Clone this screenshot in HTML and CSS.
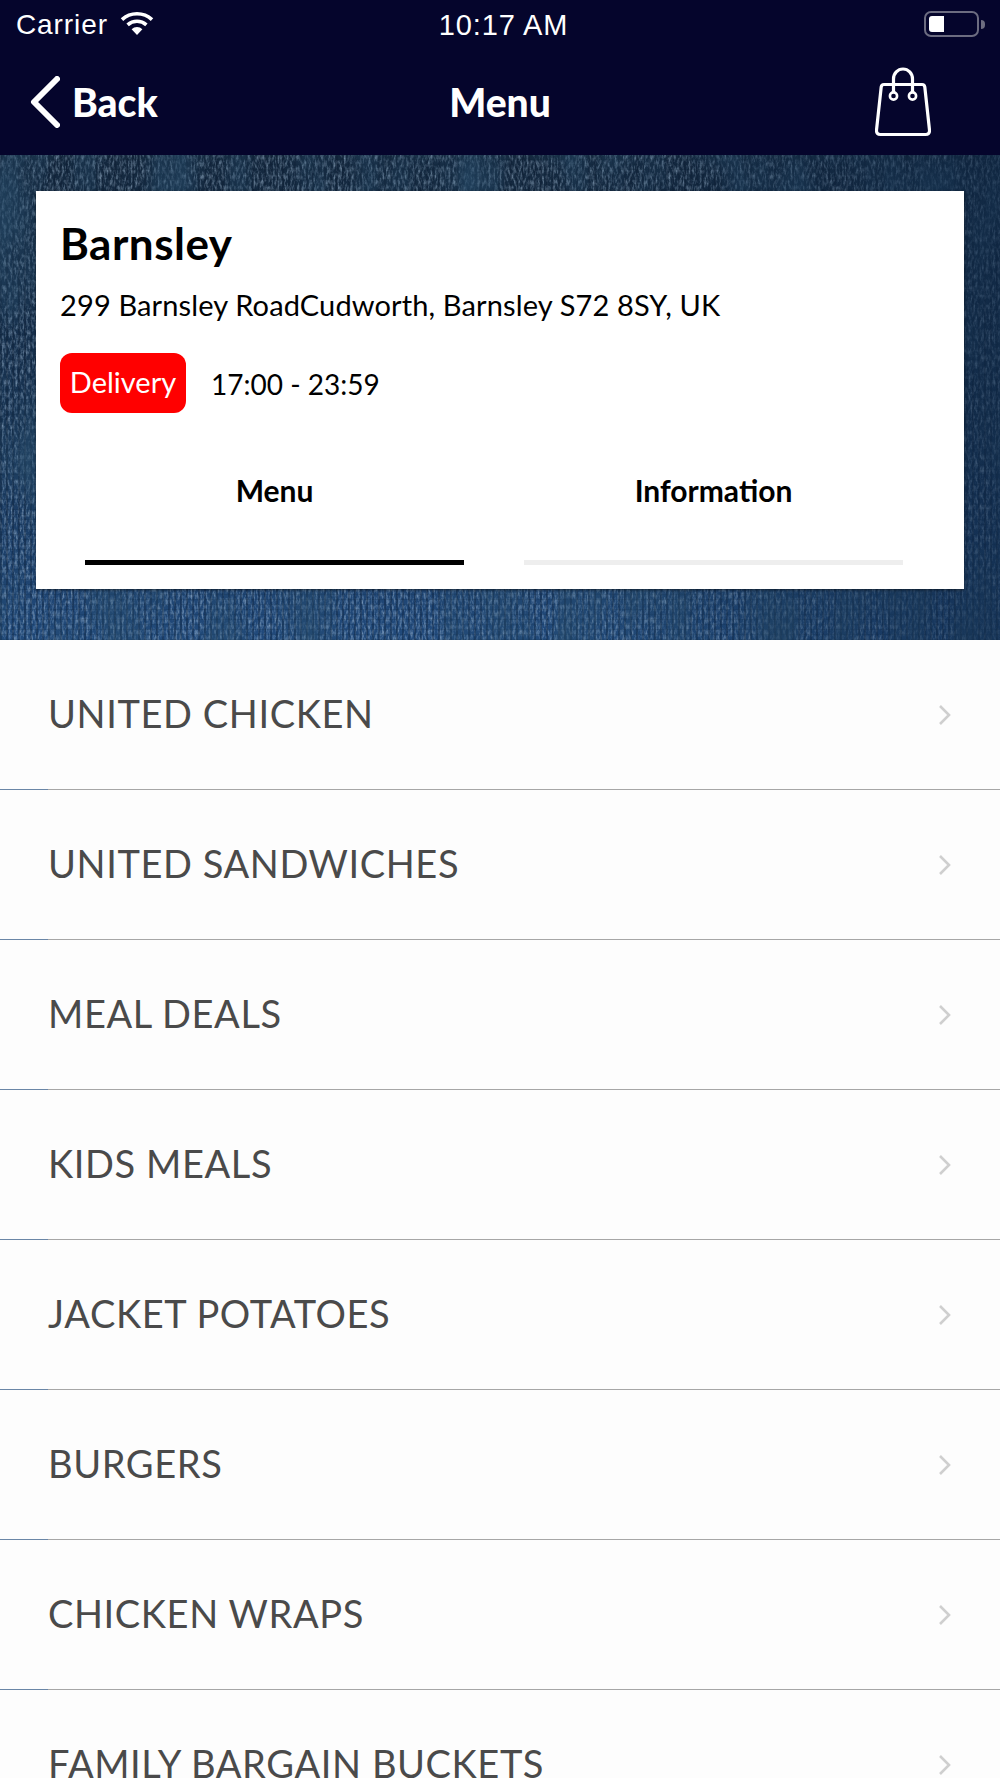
FILE: index.html
```html
<!DOCTYPE html>
<html lang="en">
<head>
  <meta charset="UTF-8" />
  <meta name="viewport" content="width=device-width, initial-scale=1.0" />
  <title>Menu - Barnsley</title>
  <link rel="stylesheet" href="styles.css">
</head>
<body>
  <header class="topbar">
    <div class="status">
      <div class="status-left">
        <span class="carrier">Carrier</span>
        <svg class="wifi" width="34" height="24" viewBox="0 0 34 24">
          <path d="M17 24 L11.6 18.2 A8 8 0 0 1 22.4 18.2 Z" fill="#fff"/>
          <path d="M2 8.6 A22 22 0 0 1 32 8.6" fill="none" stroke="#fff" stroke-width="3.6"/>
          <path d="M7.6 13.8 A14.2 14.2 0 0 1 26.4 13.8" fill="none" stroke="#fff" stroke-width="3.6"/>
        </svg>
      </div>
      <div class="status-time">10:17 AM</div>
      <div class="status-right">
        <span class="battery"><span class="battery-level"></span></span>
        <span class="battery-nub"></span>
      </div>
    </div>
    <nav class="navbar">
      <a class="back">
        <svg width="30" height="52" viewBox="0 0 30 52">
          <path d="M27 3 L4 26 L27 49" fill="none" stroke="#fff" stroke-width="6" stroke-linecap="round" stroke-linejoin="round"/>
        </svg>
        <span>Back</span>
      </a>
      <div class="nav-title">Menu</div>
      <div class="nav-right">
        <svg width="56" height="70" viewBox="0 0 56 70">
          <path d="M9 17.5 H47 Q49.5 17.5 49.8 20 L54.5 63 Q54.8 67.5 50.5 67.5 H5.5 Q1.2 67.5 1.5 63 L6.2 20 Q6.5 17.5 9 17.5 Z" fill="none" stroke="#fff" stroke-width="3.2"/>
          <path d="M18.5 25 V12 A9.5 10 0 0 1 37.5 12 V25" fill="none" stroke="#fff" stroke-width="3.2"/>
          <circle cx="18.5" cy="29" r="3.6" fill="#05052c" stroke="#fff" stroke-width="2.6"/>
          <circle cx="37.5" cy="29" r="3.6" fill="#05052c" stroke="#fff" stroke-width="2.6"/>
        </svg>
      </div>
    </nav>
  </header>

  <section class="hero">
    <svg class="denim" width="1000" height="485">
      <defs>
        <filter id="weave" x="0" y="0" width="100%" height="100%">
          <feTurbulence type="fractalNoise" baseFrequency="0.45 0.16" numOctaves="3" seed="11"/>
          <feColorMatrix type="matrix" values="0 0 0 0 0.5  0 0 0 0 0.66  0 0 0 0 0.84  1.8 0 0 0 -0.72"/>
        </filter>
        <filter id="patches" x="0" y="0" width="100%" height="100%">
          <feTurbulence type="fractalNoise" baseFrequency="0.02 0.006" numOctaves="3" seed="4"/>
          <feColorMatrix type="matrix" values="0 0 0 0 0.02  0 0 0 0 0.07  0 0 0 0 0.14  2.6 0 0 0 -1.0"/>
        </filter>
        <linearGradient id="shade" x1="0" y1="0" x2="0" y2="1">
          <stop offset="0" stop-color="#14283e"/>
          <stop offset="0.55" stop-color="#183454"/>
          <stop offset="1" stop-color="#214a7c"/>
        </linearGradient>
        <linearGradient id="fade" x1="0" y1="0" x2="1" y2="0">
          <stop offset="0.6" stop-color="#0c2340" stop-opacity="0"/>
          <stop offset="1" stop-color="#0c2340" stop-opacity="0.55"/>
        </linearGradient>
        <pattern id="ribs" width="6" height="5" patternUnits="userSpaceOnUse">
          <rect x="0" width="2" height="5" fill="#0a1a2e" opacity="0.32"/>
          <rect y="4" width="6" height="1" fill="#0a1a2e" opacity="0.14"/>
        </pattern>
      </defs>
      <rect width="1000" height="485" fill="url(#shade)"/>
      <rect width="1000" height="485" filter="url(#weave)" opacity="0.6"/>
      <rect width="1000" height="485" fill="url(#ribs)"/>
      <rect width="1000" height="485" filter="url(#patches)" opacity="0.6"/>
      <rect width="1000" height="485" fill="url(#fade)"/>
    </svg>
    <div class="card">
      <h1 class="store-name">Barnsley</h1>
      <p class="store-address">299 Barnsley RoadCudworth, Barnsley S72 8SY, UK</p>
      <div class="store-hours">
        <span class="badge">Delivery</span>
        <span class="hours">17:00 - 23:59</span>
      </div>
      <div class="tabs">
        <div class="tab tab-active">Menu</div>
        <div class="tab">Information</div>
      </div>
    </div>
  </section>

  <ul class="menu-list">
    <li class="menu-row"><span>UNITED CHICKEN</span><svg class="chev" width="13" height="22" viewBox="0 0 13 22"><path d="M2 2 L11 11 L2 20" fill="none" stroke="#cfcfcf" stroke-width="2.6"/></svg></li>
    <li class="menu-row"><span>UNITED SANDWICHES</span><svg class="chev" width="13" height="22" viewBox="0 0 13 22"><path d="M2 2 L11 11 L2 20" fill="none" stroke="#cfcfcf" stroke-width="2.6"/></svg></li>
    <li class="menu-row"><span>MEAL DEALS</span><svg class="chev" width="13" height="22" viewBox="0 0 13 22"><path d="M2 2 L11 11 L2 20" fill="none" stroke="#cfcfcf" stroke-width="2.6"/></svg></li>
    <li class="menu-row"><span>KIDS MEALS</span><svg class="chev" width="13" height="22" viewBox="0 0 13 22"><path d="M2 2 L11 11 L2 20" fill="none" stroke="#cfcfcf" stroke-width="2.6"/></svg></li>
    <li class="menu-row"><span>JACKET POTATOES</span><svg class="chev" width="13" height="22" viewBox="0 0 13 22"><path d="M2 2 L11 11 L2 20" fill="none" stroke="#cfcfcf" stroke-width="2.6"/></svg></li>
    <li class="menu-row"><span>BURGERS</span><svg class="chev" width="13" height="22" viewBox="0 0 13 22"><path d="M2 2 L11 11 L2 20" fill="none" stroke="#cfcfcf" stroke-width="2.6"/></svg></li>
    <li class="menu-row"><span>CHICKEN WRAPS</span><svg class="chev" width="13" height="22" viewBox="0 0 13 22"><path d="M2 2 L11 11 L2 20" fill="none" stroke="#cfcfcf" stroke-width="2.6"/></svg></li>
    <li class="menu-row"><span>FAMILY BARGAIN BUCKETS</span><svg class="chev" width="13" height="22" viewBox="0 0 13 22"><path d="M2 2 L11 11 L2 20" fill="none" stroke="#cfcfcf" stroke-width="2.6"/></svg></li>
  </ul>
</body>
</html>
```

FILE: styles.css
```css
html, body {
  height: 1778px;
  overflow: hidden;
}
body {
  margin: 0;
  background-color: #fdfdfd;
  font-family: "Lato", "Liberation Sans", sans-serif;
}
.topbar {
  height: 155px;
  background-color: #05052c;
  color: #fff;
}
.status {
  height: 50px;
  display: grid;
  grid-template-columns: 1fr auto 1fr;
  align-items: center;
  padding: 0 15px 0 16px;
  font-family: "Liberation Sans", Arial, sans-serif;
  font-size: 27px;
  letter-spacing: 0.9px;
}
.status-left {
  display: flex;
  align-items: center;
  gap: 12px;
}
.carrier {
  font-size: 28px;
}
.wifi {
  margin-top: -4px;
}
.status-time {
  font-size: 29px;
  padding-left: 6px;
}
.status-right {
  display: flex;
  align-items: center;
  justify-content: flex-end;
}
.battery {
  width: 55px;
  height: 26px;
  box-sizing: border-box;
  border: 2px solid #6c6c80;
  border-radius: 7px;
  padding: 3px;
  margin-top: -2px;
}
.battery-level {
  display: block;
  width: 15px;
  height: 16px;
  background-color: #fff;
  border-radius: 3px 0 0 3px;
}
.battery-nub {
  width: 4px;
  height: 9px;
  margin-left: 2px;
  margin-top: -2px;
  background-color: #6c6c80;
  border-radius: 0 4px 4px 0;
}
.navbar {
  height: 105px;
  box-sizing: border-box;
  display: grid;
  grid-template-columns: 1fr auto 1fr;
  align-items: center;
  padding: 0 30px 2px 30px;
  font-size: 39px;
  font-weight: 900;
}
.back {
  display: flex;
  align-items: center;
  gap: 12px;
}
.nav-right {
  display: flex;
  justify-content: flex-end;
  padding-right: 39px;
}

.hero {
  position: relative;
  height: 485px;
  box-sizing: border-box;
  padding: 36px 36px 0;
  overflow: hidden;
}
.denim {
  position: absolute;
  top: 0;
  left: 0;
}
.card {
  position: relative;
  height: 398px;
  box-sizing: border-box;
  background: #fff;
  padding: 26px 24px 0 24px;
  box-shadow: 0 1px 3px rgba(0,0,0,0.5);
}
.store-name {
  margin: 0;
  font-size: 44px;
  line-height: 52px;
  font-weight: 700;
  letter-spacing: 0.5px;
  color: #000;
}
.store-address {
  margin: 18px 0 0 0;
  font-size: 29px;
  line-height: 36px;
  letter-spacing: 0.13px;
  color: #000;
}
.store-hours {
  display: flex;
  align-items: center;
  gap: 25px;
  margin-top: 30px;
}
.badge {
  width: 126px;
  height: 60px;
  box-sizing: border-box;
  padding-bottom: 4px;
  display: flex;
  align-items: center;
  justify-content: center;
  background-color: #ff0000;
  color: #fff;
  border-radius: 12px;
  font-size: 29px;
}
.hours {
  font-size: 28px;
  color: #000;
  margin-top: 2px;
}
.tabs {
  display: grid;
  grid-template-columns: 379px 379px;
  gap: 60px;
  margin: 54px 0 0 25px;
}
.tab {
  height: 98px;
  box-sizing: border-box;
  padding-top: 5px;
  border-bottom: 5px solid #eeeeee;
  text-align: center;
  font-size: 30px;
  font-weight: 700;
  color: #000;
}
.tab-active {
  border-bottom-color: #000;
}

.menu-list {
  list-style: none;
  margin: 0;
  padding: 0;
}
.menu-row {
  height: 150px;
  box-sizing: border-box;
  display: flex;
  align-items: center;
  justify-content: space-between;
  padding: 0 49px 0 48px;
  font-size: 38px;
  letter-spacing: 0.6px;
  color: #4a4a4a;
  background: linear-gradient(to right, #6a86a6 48px, #a6a6a6 48px) bottom / 100% 1px no-repeat;
}
.menu-row span {
  margin-top: -4px;
}
```
